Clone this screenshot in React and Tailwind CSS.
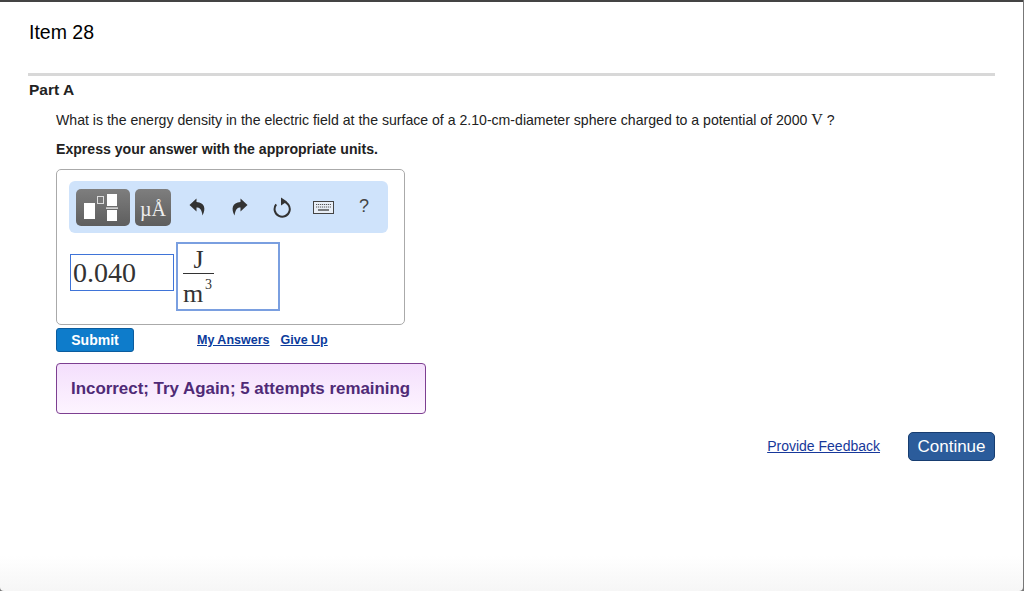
const sans = { fontFamily: '"Liberation Sans", Arial, sans-serif' };
const serif = { fontFamily: '"Liberation Serif", serif' };

function TemplatesIcon() {
  return (
    <svg width="54" height="37" viewBox="0 0 54 37">
      <rect x="8" y="14" width="11" height="16" fill="#fff" />
      <rect x="21.5" y="7.5" width="6" height="7" fill="#777" stroke="#ddd" strokeWidth="1" />
      <rect x="31" y="5" width="10" height="12" fill="#fff" />
      <rect x="30" y="18.5" width="12" height="1.2" fill="#fff" />
      <rect x="31" y="21" width="10" height="11" fill="#fff" />
    </svg>
  );
}

function UndoIcon({ flip }) {
  return (
    <svg width="17" height="18" viewBox="0 0 16 18" className={flip ? "-scale-x-100" : ""}>
      <path d="M7 0.5 L0 7 L7 13.5 V9.5 C10 9.5 12 11 13 17.5 C16.5 11 15.5 4.5 7 4 Z" fill="#333" />
    </svg>
  );
}

function ResetIcon() {
  return (
    <svg width="20" height="21" viewBox="0 0 20 21">
      <path d="M10.5 4.5 A7.6 7.6 0 1 1 4.2 7.4" fill="none" stroke="#333" strokeWidth="2" />
      <path d="M9 0.5 L15 4.6 L9 8.5 Z" fill="#333" />
    </svg>
  );
}

function KeyboardIcon() {
  return (
    <svg width="21" height="13" viewBox="0 0 21 13">
      <rect x="0.5" y="0.5" width="20" height="12" fill="#e8eef6" stroke="#444" />
      <path d="M3 3.5H18M3 6H18" stroke="#555" strokeWidth="1.2" strokeDasharray="1.2 0.8" />
      <path d="M5 9H16" stroke="#555" strokeWidth="1.4" />
    </svg>
  );
}

export default function App() {
  return (
    <div className="h-[591px] w-[1024px] overflow-hidden bg-[#777]" style={sans}>
      <div className="mr-px h-full overflow-hidden rounded-b-[4px] border-t-2 border-[#444] bg-gradient-to-b from-white from-[94%] to-[#f6f6f6] text-[#222]">
        <div className="pl-[29px] pr-[28px]">
          <h1 className="pt-[18px] text-[19.5px] leading-[24px] text-black">Item 28</h1>
          <div className="mt-[29px] h-[3px] -ml-px bg-[#d8d8d8]" />
          <h2 className="mt-[5px] text-[15.5px] font-bold leading-[18px]">Part A</h2>

          <div className="pl-[27px]">
            <p className="mt-[12px] text-[14.1px] leading-[18px]">
              What is the energy density in the electric field at the surface of a 2.10-cm-diameter sphere charged to a potential of 2000{" "}
              <span className="text-[16px]" style={serif}>V</span> ?
            </p>
            <p className="mt-[11px] text-[14.1px] font-bold leading-[18px]">Express your answer with the appropriate units.</p>

            <div className="mt-[11px] h-[156px] w-[349px] rounded-[5px] border border-[#aaa] pl-[12px] pt-[11px]">
              <div className="flex h-[52px] w-[319px] items-center rounded-[6px] bg-[#cfe3fb] pl-[7px]">
                <div className="h-[37px] w-[54px] rounded-[5px] bg-gradient-to-b from-[#7e7e7e] to-[#5e5e5e]">
                  <TemplatesIcon />
                </div>
                <div className="ml-[5px] flex h-[37px] w-[36px] items-center justify-center rounded-[5px] bg-gradient-to-b from-[#7e7e7e] to-[#5e5e5e] pt-[3px] text-[20px] leading-none text-[#eee]" style={serif}>
                  µÅ
                </div>
                <div className="ml-[18px] flex"><UndoIcon /></div>
                <div className="ml-[25px] flex"><UndoIcon flip /></div>
                <div className="ml-[24px] flex"><ResetIcon /></div>
                <div className="ml-[21px] flex"><KeyboardIcon /></div>
                <div className="ml-[25px] pb-[1px] text-[18px] text-[#444]">?</div>
              </div>

              <div className="ml-px mt-[9px] flex items-start" style={serif}>
                <div className="mt-[12px] flex h-[37px] w-[104px] items-center border border-[#3f74d8] pl-[2px] text-[28px] leading-none text-[#333]">0.040</div>
                <div className="ml-[2px] flex h-[69px] w-[104px] items-start border-2 border-[#7a9fe0] pl-[5px] pt-[3px]">
                  <div className="relative flex w-[31px] flex-col items-center text-[26px] leading-[26px] text-[#333]">
                    <span>J</span>
                    <span className="h-px w-full bg-[#333]" />
                    <span className="mt-[7px] self-start">m</span>
                    <span className="absolute right-[2px] top-[31px] text-[14px] leading-none">3</span>
                  </div>
                </div>
              </div>
            </div>

            <div className="mt-[3px] flex items-center">
              <button className="h-[24px] w-[78px] rounded-[3px] border border-[#0b5c9e] bg-[#0e7ccb] text-[14px] font-bold leading-none text-white">Submit</button>
              <a className="ml-[63px] text-[12.5px] font-bold text-[#0b3b9c] underline">My Answers</a>
              <a className="ml-[11px] text-[12.5px] font-bold text-[#0b3b9c] underline">Give Up</a>
            </div>

            <div className="mt-[11px] flex h-[51px] w-[370px] items-center rounded-[4px] border border-[#7d3f91] bg-gradient-to-b from-[#f4dffc] to-[#fdf4ff] pl-[14px] text-[16.9px] font-bold text-[#4f2a76]">
              Incorrect; Try Again; 5 attempts remaining
            </div>
          </div>

          <div className="mt-[18px] flex items-center justify-end">
            <a className="text-[14px] text-[#17389a] underline">Provide Feedback</a>
            <button className="ml-[28px] h-[29px] w-[87px] rounded-[5px] border border-[#173d70] bg-[#2b5c9b] text-[17px] leading-none text-white">Continue</button>
          </div>
        </div>
      </div>
    </div>
  );
}
